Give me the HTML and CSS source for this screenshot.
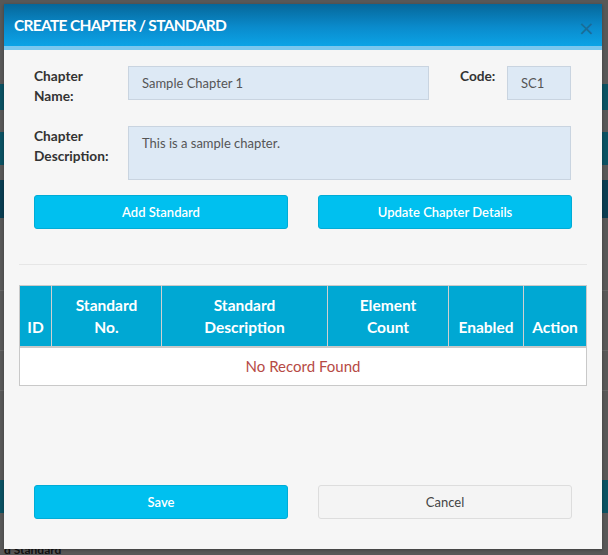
FILE: index.html
```html
<!DOCTYPE html>
<html>
<head>
<meta charset="utf-8">
<link rel="stylesheet" href="styles.css">
</head>
<body>
<div class="page">
  <div class="band gap84"></div>
  <div class="band teal h26"></div>
  <div class="band gap22"></div>
  <div class="band teal h33"></div>
  <div class="band gap15"></div>
  <div class="band navy h38"></div>
  <div class="band gap72"></div>
  <div class="band line"></div>
  <div class="band gap59"></div>
  <div class="band line"></div>
  <div class="band gap39"></div>
  <div class="band line"></div>
  <div class="band gap89"></div>
  <div class="band teal h33"></div>
  <div class="band gap33"></div>
  <div class="bgtext">d Standard</div>
</div>

<div class="modal">
  <div class="modal-header">
    <h4 class="modal-title">CREATE CHAPTER / STANDARD</h4>
    <span class="close">&times;</span>
  </div>
  <div class="modal-body">
    <div class="row row-name">
      <label class="lbl lbl-name">Chapter<br>Name:</label>
      <div class="input input-name">Sample Chapter 1</div>
      <label class="lbl lbl-code">Code:</label>
      <div class="input input-code">SC1</div>
    </div>
    <div class="row row-desc">
      <label class="lbl lbl-name">Chapter<br>Description:</label>
      <div class="input textarea">This is a sample chapter.</div>
    </div>
    <div class="btn-row">
      <button class="btn btn-info">Add Standard</button>
      <button class="btn btn-info">Update Chapter Details</button>
    </div>
    <hr class="divider">
    <table class="grid">
      <thead>
        <tr>
          <th class="c-id">ID</th>
          <th class="c-no">Standard<br>No.</th>
          <th class="c-desc">Standard<br>Description</th>
          <th class="c-count">Element<br>Count</th>
          <th class="c-en">Enabled</th>
          <th class="c-act">Action</th>
        </tr>
      </thead>
      <tbody>
        <tr><td colspan="6" class="empty">No Record Found</td></tr>
      </tbody>
    </table>
    <div class="btn-row footer">
      <button class="btn btn-info">Save</button>
      <button class="btn btn-default">Cancel</button>
    </div>
  </div>
</div>
</body>
</html>
```

FILE: styles.css
```css
* { box-sizing: border-box; }
html, body { margin: 0; padding: 0; }
body {
  width: 608px;
  height: 555px;
  overflow: hidden;
  background: #585858;
  font-family: "Source Sans Pro", Lato, "Open Sans", sans-serif;
  position: relative;
}
.page { display: flex; flex-direction: column; }
.band { width: 100%; }
.gap84 { height: 84px; }
.gap22 { height: 22px; }
.gap15 { height: 15px; }
.gap72 { height: 72px; }
.gap59 { height: 59px; }
.gap39 { height: 39px; }
.gap89 { height: 89px; }
.gap33 { height: 30px; }
.teal { background: #0b5263; }
.navy { background: #0a3d52; }
.h26 { height: 26px; }
.h33 { height: 33px; }
.h38 { height: 38px; }
.line { height: 1px; background: #666; }
.bgtext { color: #111; font-size: 12px; font-weight: 700; padding-left: 4px; line-height: 14px; }

.modal {
  position: absolute;
  left: 4px;
  top: 4px;
  width: 598px;
  height: 545px;
  background: #f6f6f6;
  box-shadow: 0 1px 3px rgba(0,0,0,0.3);
}
.modal-header {
  height: 42px;
  background: linear-gradient(to bottom, #06679a 0%, #0a8bcc 55%, #0ba3e6 100%);
  border-bottom: 4px solid #79c7ee;
  display: flex;
  align-items: center;
  justify-content: space-between;
  padding: 0 12px 0 10px;
  box-sizing: content-box;
}
.modal-title {
  margin: 0;
  color: #fff;
  font-size: 15.5px;
  font-weight: 700;
  letter-spacing: -0.7px;
}
.close {
  color: #1a6d98;
  font-size: 20px;
  line-height: 1;
  font-family: "DejaVu Sans", sans-serif;
  padding-top: 5px;
  margin-right: -5px;
}
.modal-body { padding: 16px 15px 0 15px; }
.row { display: flex; align-items: flex-start; }
.lbl {
  color: #333;
  font-weight: 700;
  font-size: 13.7px;
  line-height: 20px;
}
.lbl-name { width: 94px; margin-left: 15px; padding-top: 0; }
.lbl-code { margin-left: 31px; width: 47px; padding-top: 0; }
.input {
  background: #dde9f5;
  border: 1px solid #c9d4e0;
  color: #555;
  font-size: 13px;
  padding: 0 13px;
  height: 34px;
  line-height: 32px;
}
.input-name { width: 301px; }
.input-code { width: 64px; }
.row-desc { margin-top: 20px; }
.textarea { width: 443px; height: 54px; line-height: 18px; padding-top: 7px; }
.btn-row { display: flex; gap: 30px; margin-top: 15px; padding-left: 15px; }
.btn {
  width: 254px;
  height: 34px;
  border-radius: 3px;
  font-family: inherit;
  font-size: 13px;
  cursor: pointer;
}
.btn-info { background: #00c0ef; border: 1px solid #00acd6; color: #fff; font-weight: 600; }
.btn-default { background: #f4f4f4; border: 1px solid #ddd; color: #444; }
.divider { border: 0; border-top: 1px solid #e6e6e6; margin: 35px 0 0 0; }
.grid {
  margin-top: 20px;
  width: 568px;
  border-collapse: collapse;
  background: #fff;
  border: 1px solid #c9c9c9;
}
.grid th {
  background: #00a8d3;
  color: #fff;
  font-weight: 700;
  font-size: 15.5px;
  line-height: 22px;
  height: 61px;
  vertical-align: bottom;
  padding: 0 2px 8px;
  border-left: 1px solid #d0d0d0;
  border-bottom: 2px solid #c9c9c9;
  text-align: center;
}
.grid th:first-child { border-left: 0; }
.c-id { width: 32px; }
.c-no { width: 110px; }
.c-desc { width: 166px; }
.c-count { width: 121px; }
.c-en { width: 75px; }
.c-act { width: 63px; }
.grid td.empty {
  height: 39px;
  text-align: center;
  color: #b64a45;
  font-size: 15px;
  padding: 0;
}
.footer { margin-top: 99px; }
```
